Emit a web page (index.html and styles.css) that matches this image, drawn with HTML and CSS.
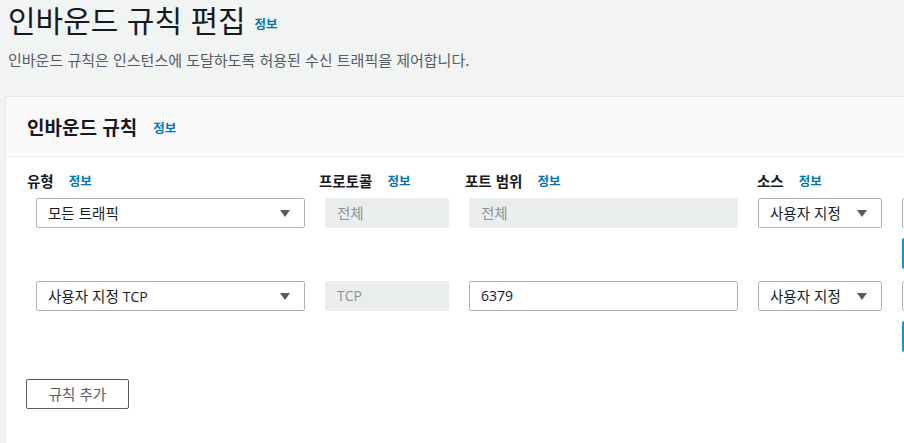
FILE: index.html
```html
<!DOCTYPE html>
<html lang="ko">
<head>
<meta charset="utf-8">
<link rel="stylesheet" href="styles.css">
</head>
<body>
<div class="page">
  <div class="title-row">
    <h1 class="title">인바운드 규칙 편집</h1>
    <a class="info info-title">정보</a>
  </div>
  <p class="subtitle">인바운드 규칙은 인스턴스에 도달하도록 허용된 수신 트래픽을 제어합니다.</p>
  <div class="panel">
    <div class="panel-head">
      <h2 class="panel-title">인바운드 규칙</h2>
      <a class="info info-head">정보</a>
    </div>
    <div class="panel-body">
      <div class="labels">
        <div class="label">유형<a class="info">정보</a></div>
        <div class="label">프로토콜<a class="info">정보</a></div>
        <div class="label">포트 범위<a class="info">정보</a></div>
        <div class="label">소스<a class="info">정보</a></div>
      </div>
      <div class="rule">
        <div class="select">모든 트래픽</div>
        <div class="disabled">전체</div>
        <div class="disabled">전체</div>
        <div class="select">사용자 지정</div>
        <div class="extra">
          <div class="field"></div>
          <div class="blue"></div>
        </div>
      </div>
      <div class="rule">
        <div class="select">사용자 지정 <span class="latin">TCP</span></div>
        <div class="disabled latin">TCP</div>
        <div class="input latin">6379</div>
        <div class="select">사용자 지정</div>
        <div class="extra">
          <div class="field"></div>
          <div class="blue"></div>
        </div>
      </div>
      <button class="add">규칙 추가</button>
    </div>
  </div>
</div>
</body>
</html>
```

FILE: styles.css
```css
html, body {
  margin: 0;
  padding: 0;
  overflow: hidden;
  background: #f2f3f3;
}
body {
  font-family: "Noto Sans CJK KR", sans-serif;
  color: #16191f;
  width: 904px;
  height: 443px;
}
.latin {
  font-family: "Open Sans", "Noto Sans CJK KR", sans-serif;
}
.page {
  padding-top: 0;
}
.title-row {
  display: flex;
  align-items: flex-end;
  height: 38px;
  margin-left: 8px;
}
.title {
  margin: 0;
  font-size: 30px;
  font-weight: 400;
  line-height: 38px;
  height: 38px;
  color: #16191f;
}
.info {
  font-size: 12.5px;
  font-weight: 700;
  color: #0073bb;
  text-decoration: none;
}
.info-title {
  margin-left: 9px;
  line-height: 16px;
  margin-bottom: 6px;
}
.subtitle {
  margin: 12px 0 0 8px;
  font-size: 15px;
  line-height: 20px;
  height: 20px;
  color: #545b64;
}
.panel {
  margin: 26px 0 0 5px;
  width: 1100px;
  background: #fff;
  border: 1px solid #e4e8e8;
  border-right: none;
  height: 400px;
}
.panel-head {
  height: 59px;
  background: #fafafa;
  border-bottom: 1px solid #eaeded;
  display: flex;
  align-items: center;
  padding-left: 21px;
}
.panel-title {
  margin: 0;
  font-size: 19px;
  font-weight: 700;
  line-height: 24px;
  height: 24px;
}
.info-head {
  margin-left: 16px;
  line-height: 16px;
  position: relative;
  top: 1px;
}
.panel-body {
  padding: 14px 0 0 0;
}
.labels {
  display: grid;
  grid-template-columns: 292px 146px 292px 200px;
  padding-left: 21px;
  margin-bottom: 7px;
  height: 20px;
}
.label {
  display: flex;
  align-items: center;
  font-size: 14.5px;
  font-weight: 700;
  line-height: 20px;
  height: 20px;
  white-space: nowrap;
}
.label .info {
  margin-left: 15px;
  line-height: 16px;
}
.rule {
  display: grid;
  grid-template-columns: 269px 124px 269px 124px 200px;
  column-gap: 20px;
  padding-left: 30px;
  margin-bottom: 12px;
  align-items: start;
}
.select, .input, .disabled, .field {
  box-sizing: border-box;
  height: 30px;
  border: 1px solid #aab7b8;
  border-radius: 2px;
  font-size: 14.5px;
  line-height: 28px;
  padding-left: 11px;
  white-space: nowrap;
  background: #fff;
  overflow: hidden;
}
.input.latin, .disabled.latin {
  font-size: 14px;
}
.select .latin {
  font-size: 14px;
}
.select {
  position: relative;
}
.select::after {
  content: "";
  position: absolute;
  right: 14px;
  top: 11px;
  border-left: 5px solid transparent;
  border-right: 5px solid transparent;
  border-top: 7px solid #545b64;
}
.disabled {
  background: #eaeded;
  border-color: #eaeded;
  color: #879596;
}
.extra {
  display: flex;
  flex-direction: column;
}
.blue {
  margin-top: 10px;
  height: 31px;
  box-sizing: border-box;
  border: 2px solid #00a1c9;
  border-radius: 2px;
}
.add {
  display: block;
  margin: 27px 0 0 20px;
  box-sizing: border-box;
  width: 103px;
  height: 30px;
  border: 1px solid #545b64;
  border-radius: 2px;
  background: #fff;
  color: #545b64;
  font-family: "Noto Sans CJK KR", sans-serif;
  font-size: 14.5px;
  line-height: 28px;
  padding: 0;
}
```
